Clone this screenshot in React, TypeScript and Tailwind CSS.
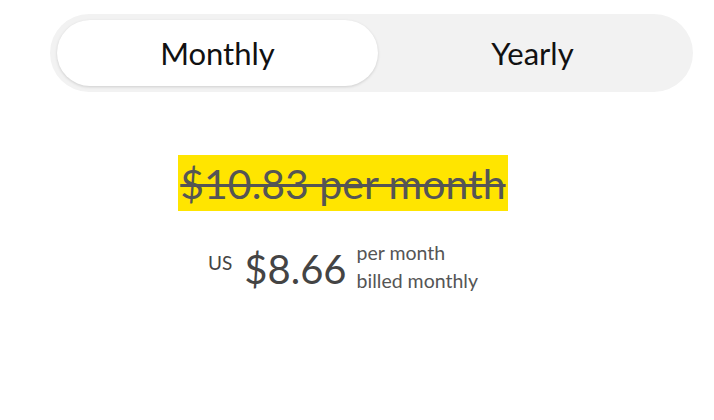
export default function App() {
  return (
    <div className="w-[714px] h-[420px] bg-white overflow-hidden" style={{ fontFamily: "Lato, 'Liberation Sans', sans-serif" }}>
      <div className="pt-[14px] pl-[50px] w-[693px]">
        <div className="flex h-[78px] rounded-full bg-[#f2f2f2] p-[6px] pl-[7px]">
          <button className="w-[321px] h-[66px] rounded-full bg-white shadow-[0_1px_3px_rgba(0,0,0,0.15)] text-[31px] text-[#111] flex items-center justify-center">
            Monthly
          </button>
          <button className="flex-1 h-[66px] rounded-full text-[31px] text-[#111] flex items-center justify-center">
            Yearly
          </button>
        </div>
      </div>
      <div className="w-[686px] flex flex-col items-center mt-[63px]">
        <div className="bg-[#ffe500] h-[56px] px-[2px] flex items-center">
          <span className="text-[41px] text-[#555] line-through decoration-[3px] leading-none">$10.83 per month</span>
        </div>
        <div className="flex items-start mt-[28px] text-[#444]">
          <span className="text-[19px] mt-[10px] mr-[12px]">US</span>
          <span className="text-[40px] leading-none mt-[10px] mr-[10px]">$8.66</span>
          <div className="flex flex-col text-[19.5px] leading-[28px] text-[#555]">
            <span>per month</span>
            <span>billed monthly</span>
          </div>
        </div>
      </div>
    </div>
  );
}
